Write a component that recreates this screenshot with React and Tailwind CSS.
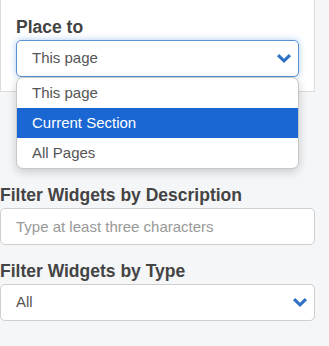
const Chevron = () => (
  <svg width="14" height="9" viewBox="0 0 14 9" className="shrink-0">
    <path d="M0 2.2 L2.2 0 L7 4.8 L11.8 0 L14 2.2 L7 9 Z" fill="#2f72c4" />
  </svg>
);

const options = ['This page', 'Current Section', 'All Pages'];

export default function App() {
  return (
    <div className="w-[329px] h-[346px] bg-[#f5f6f8] font-['Liberation_Sans',Arial,sans-serif] text-[#444] overflow-hidden">
      {/* Place to card */}
      <div className="w-[315px] h-[92px] bg-white border-l border-r border-b border-[#dcdcdc] pt-[17px] pl-[15px]">
        <label className="block text-[17.5px] leading-[20px] font-bold">Place to</label>
        <div className="relative mt-[3px] w-[283px]">
          <div className="h-[37px] flex items-center justify-between pl-[15px] pr-[7px] border border-[#5a93d2] rounded-[5px] bg-white shadow-[0_0_6px_rgba(102,160,230,0.55)] text-[15px] text-[#555]">
            <span>This page</span>
            <Chevron />
          </div>
          <ul className="absolute left-0 top-[37px] z-10 w-[283px] bg-white border border-[#c8c8c8] rounded-[7px] overflow-hidden shadow-[0_3px_10px_rgba(0,0,0,0.18)] text-[15px] text-[#555]">
            {options.map((o) => (
              <li
                key={o}
                className={
                  o === 'Current Section'
                    ? 'h-[30px] flex items-center pl-[15px] bg-[#1a66d3] text-white'
                    : 'h-[30px] flex items-center pl-[15px]'
                }
              >
                {o}
              </li>
            ))}
          </ul>
        </div>
      </div>

      {/* Filters */}
      <div className="pt-[93px] w-[315px]">
        <label className="block text-[17.5px] leading-[20px] font-bold">Filter Widgets by Description</label>
        <input
          type="text"
          placeholder="Type at least three characters"
          className="mt-[3px] block w-[315px] h-[37px] pl-[15px] border border-[#cfcfcf] rounded-[5px] bg-white text-[15px] placeholder:text-[#999] outline-none"
        />
        <label className="block mt-[16px] text-[17.5px] leading-[20px] font-bold">Filter Widgets by Type</label>
        <div className="mt-[3px] h-[37px] flex items-center justify-between pl-[15px] pr-[7px] border border-[#cfcfcf] rounded-[5px] bg-white text-[15px] text-[#555]">
          <span>All</span>
          <Chevron />
        </div>
      </div>
    </div>
  );
}
